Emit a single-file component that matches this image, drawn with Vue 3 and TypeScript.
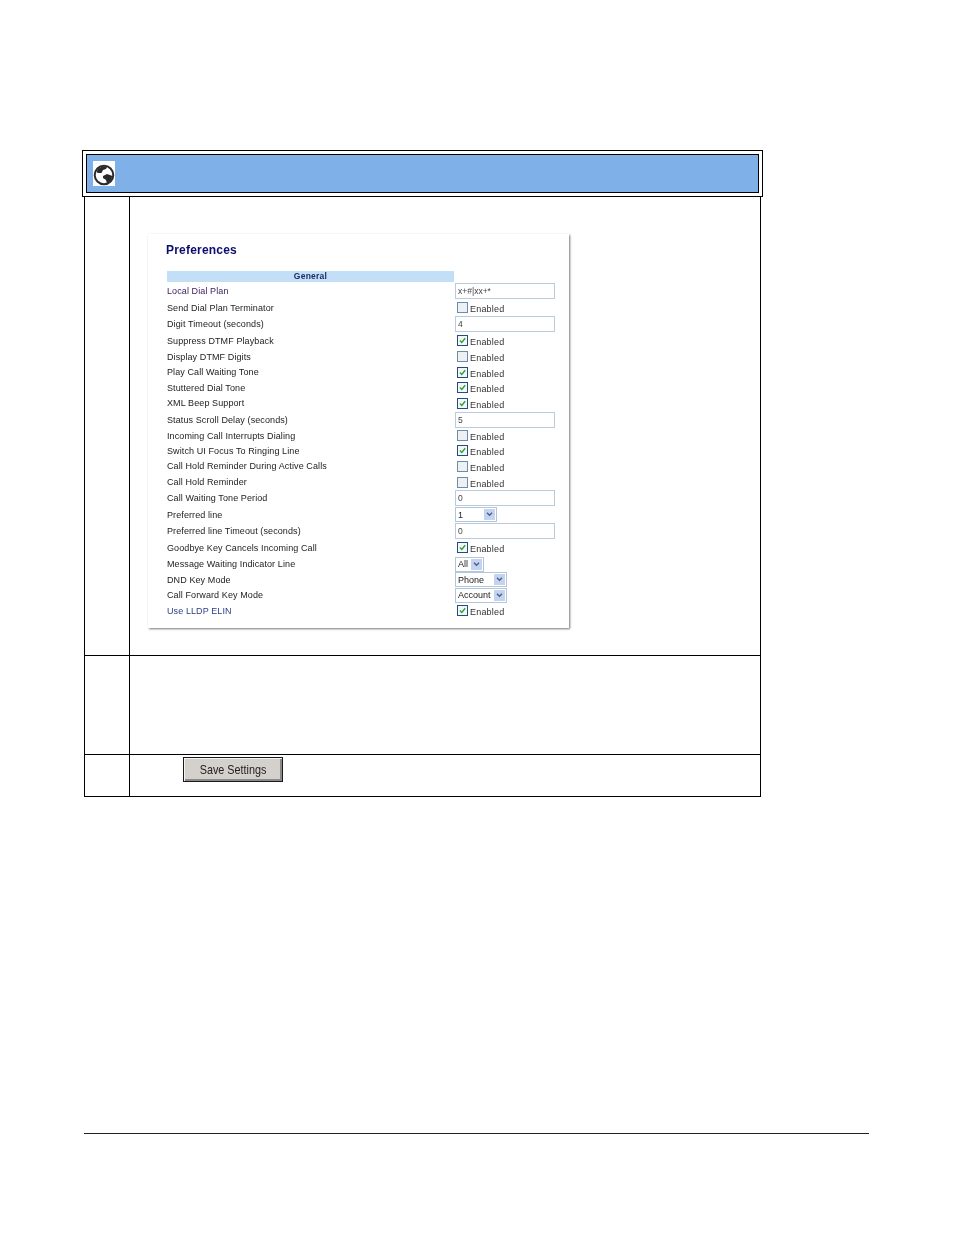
<script setup lang="ts">
type Kind = 'text' | 'check' | 'select'
interface Row { label: string; kind: Kind; value?: string; on?: boolean; h: number; w?: number; purple?: boolean; link?: boolean }
const rows: Row[] = [
  { label: 'Local Dial Plan', kind: 'text', value: 'x+#|xx+*', h: 16, purple: true },
  { label: 'Send Dial Plan Terminator', kind: 'check', on: false, h: 17 },
  { label: 'Digit Timeout (seconds)', kind: 'text', value: '4', h: 16 },
  { label: 'Suppress DTMF Playback', kind: 'check', on: true, h: 17 },
  { label: 'Display DTMF Digits', kind: 'check', on: false, h: 15 },
  { label: 'Play Call Waiting Tone', kind: 'check', on: true, h: 16 },
  { label: 'Stuttered Dial Tone', kind: 'check', on: true, h: 15 },
  { label: 'XML Beep Support', kind: 'check', on: true, h: 16 },
  { label: 'Status Scroll Delay (seconds)', kind: 'text', value: '5', h: 17 },
  { label: 'Incoming Call Interrupts Dialing', kind: 'check', on: false, h: 15 },
  { label: 'Switch UI Focus To Ringing Line', kind: 'check', on: true, h: 15 },
  { label: 'Call Hold Reminder During Active Calls', kind: 'check', on: false, h: 16 },
  { label: 'Call Hold Reminder', kind: 'check', on: false, h: 16 },
  { label: 'Call Waiting Tone Period', kind: 'text', value: '0', h: 16 },
  { label: 'Preferred line', kind: 'select', value: '1', w: 42, h: 17 },
  { label: 'Preferred line Timeout (seconds)', kind: 'text', value: '0', h: 16 },
  { label: 'Goodbye Key Cancels Incoming Call', kind: 'check', on: true, h: 17 },
  { label: 'Message Waiting Indicator Line', kind: 'select', value: 'All', w: 29, h: 16 },
  { label: 'DND Key Mode', kind: 'select', value: 'Phone', w: 52, h: 15 },
  { label: 'Call Forward Key Mode', kind: 'select', value: 'Account', w: 52, h: 16 },
  { label: 'Use LLDP ELIN', kind: 'check', on: true, h: 15, link: true },
]
</script>

<template>
  <main class="page">
    <div class="head-outer">
      <div class="head-inner">
        <span class="globe">
          <svg viewBox="0 0 22 25" width="22" height="25">
            <circle cx="11" cy="14" r="9.3" fill="#fff" stroke="#2a2a2a" stroke-width="2" />
            <path d="M3.5 11 L5 8 L9 5.5 L14 6 L13 8 L10 9 L8.5 12 L5 12 Z" fill="#2a2a2a" />
            <path d="M10 15 L14 13 L19.5 15 L18 19 L14 22.5 L13 19 L10 17 Z" fill="#2a2a2a" />
          </svg>
        </span>
      </div>
    </div>

    <div class="row row-a">
      <div class="num"></div>
      <div class="body body-a">
        <section class="panel">
          <h2>Preferences</h2>
          <div class="band">General</div>
          <div v-for="r in rows" :key="r.label" class="pref" :style="{ height: r.h + 'px' }">
            <span class="label" :class="{ purple: r.purple, link: r.link }">{{ r.label }}</span>
            <span v-if="r.kind === 'text'" class="field">{{ r.value }}</span>
            <span v-else-if="r.kind === 'check'" class="check-wrap">
              <span class="box" :class="{ on: r.on }">
                <svg v-if="r.on" viewBox="0 0 9 9" width="9" height="9">
                  <path d="M2 4.5 L3.8 6.5 L7.2 2.2" fill="none" stroke="#2aa52f" stroke-width="1.4" />
                </svg>
              </span>
              <span class="en">Enabled</span>
            </span>
            <span v-else class="select" :style="{ width: r.w + 'px' }">
              <span class="sel-val">{{ r.value }}</span>
              <span class="arrow">
                <svg viewBox="0 0 8 6" width="7" height="5">
                  <path d="M1 1 L4 4 L7 1" fill="none" stroke="#4a5f88" stroke-width="1.6" />
                </svg>
              </span>
            </span>
          </div>
        </section>
      </div>
    </div>

    <div class="row row-b">
      <div class="num"></div>
      <div class="body"></div>
    </div>

    <div class="row row-c">
      <div class="num"></div>
      <div class="body body-c">
        <button class="save" type="button"><span class="save-text">Save Settings</span></button>
      </div>
    </div>

    <div class="footer-rule"></div>
  </main>
</template>

<style scoped>
.page {
  box-sizing: border-box;
  width: 954px;
  height: 1235px;
  padding: 150px 0 0 82px;
  font-family: "Liberation Sans", Arial, sans-serif;
  background: #fff;
  overflow: hidden;
}
.head-outer {
  box-sizing: border-box;
  width: 681px;
  height: 47px;
  border: 1px solid #000;
  padding: 3px;
}
.head-inner {
  box-sizing: border-box;
  height: 39px;
  border: 1px solid #000;
  background: #7fb1e8;
  padding: 6px 0 0 6px;
}
.globe {
  display: block;
  width: 22px;
  height: 25px;
  background: #fff;
  filter: blur(0.4px);
}
.row {
  box-sizing: border-box;
  width: 677px;
  margin-left: 2px;
  display: flex;
  border-left: 1px solid #000;
  border-right: 1px solid #000;
  border-bottom: 1px solid #000;
}
.row-a { height: 459px; }
.row-b { height: 99px; }
.row-c { height: 42px; }
.num {
  width: 44px;
  flex: none;
  border-right: 1px solid #000;
}
.body { flex: 1; min-width: 0; }
.body-a { padding: 37px 0 0 18px; }
.panel {
  box-sizing: border-box;
  width: 421px;
  height: 394px;
  background: #fff;
  padding: 8px 0 0 18px;
  box-shadow: 1px 1px 2px #777;
  filter: blur(0.3px);
}
h2 {
  margin: 0;
  height: 29px;
  font-size: 12px;
  line-height: 16px;
  font-weight: 700;
  letter-spacing: 0.2px;
  color: #0c0c6e;
}
.band {
  width: 287px;
  height: 11px;
  margin: 0 0 1px 1px;
  background: #c3dff8;
  font-size: 8.5px;
  line-height: 11px;
  font-weight: 700;
  letter-spacing: 0.25px;
  color: #1c2c66;
  text-align: center;
}
.pref {
  display: flex;
  align-items: center;
  font-size: 9px;
  color: #222;
}
.label {
  box-sizing: border-box;
  width: 289px;
  flex: none;
  padding-left: 1px;
  letter-spacing: 0.1px;
  white-space: nowrap;
}
.purple { color: #3a1a5c; }
.link { color: #2d3f84; }
.field {
  box-sizing: border-box;
  width: 100px;
  height: 16px;
  border: 1px solid #b9cbdd;
  padding-left: 2px;
  font-size: 8.5px;
  line-height: 14px;
  color: #444;
  background: #fff;
}
.check-wrap {
  display: flex;
  align-items: center;
  padding-left: 2px;
  gap: 2px;
}
.box {
  box-sizing: border-box;
  width: 11px;
  height: 11px;
  border: 1px solid #6d8bab;
  background: #eef1f4;
  display: block;
  margin-top: 0;
  line-height: 0;
}
.box.on { border-color: #1f4f7f; background: #f4f6f8; }
.en {
  font-size: 9px;
  letter-spacing: 0.2px;
  color: #333;
  margin-top: 3px;
}
.select {
  box-sizing: border-box;
  height: 15px;
  border: 1px solid #b4c6da;
  display: flex;
  align-items: center;
  justify-content: space-between;
  padding: 0 1px 0 2px;
  font-size: 9px;
  color: #222;
  background: #fff;
}
.arrow {
  width: 11px;
  height: 11px;
  background: #c3d3f0;
  display: flex;
  align-items: center;
  justify-content: center;
}
.body-c { padding: 2px 0 0 53px; }
.save {
  box-sizing: border-box;
  display: block;
  width: 100px;
  height: 25px;
  padding: 0;
  background: #d4d0cc;
  border: 1px solid #1a1a1a;
  box-shadow: inset 1px 1px 0 #f4f4f4, inset -2px -2px 0 #8a8a8a;
  font-family: "Liberation Sans", Arial, sans-serif;
  font-size: 12px;
  color: #222;
}
.save-text {
  display: inline-block;
  transform: scale(0.9, 1.1);
  filter: blur(0.3px);
}
.footer-rule {
  width: 785px;
  height: 1px;
  margin: 336px 0 0 2px;
  background: #222;
}
</style>
